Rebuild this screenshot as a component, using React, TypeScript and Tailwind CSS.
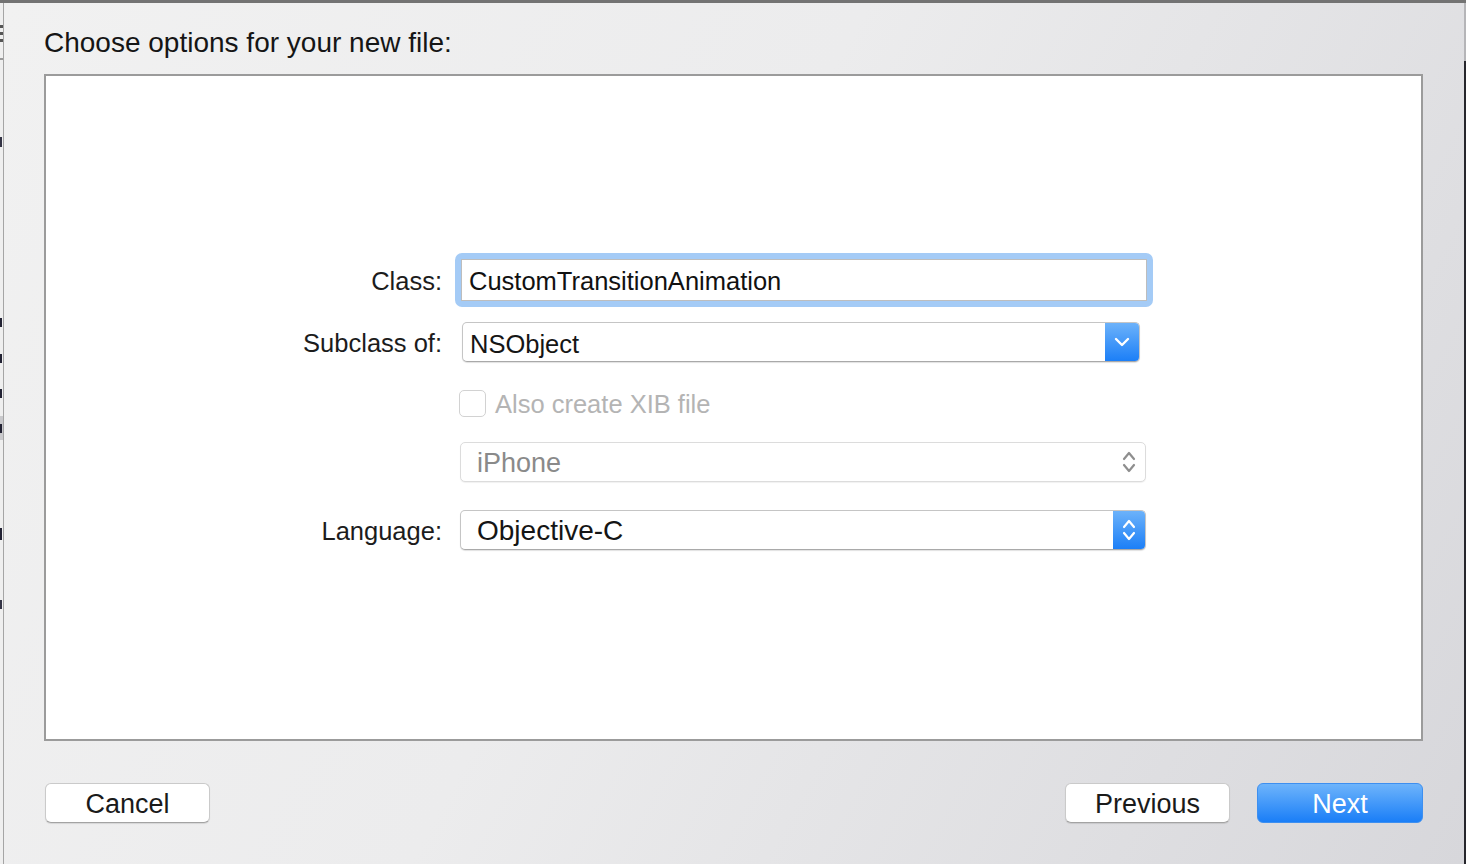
import React from 'react';

const ChevronDown = ({ color = '#fff' }: { color?: string }) => (
  <svg width="16" height="10" viewBox="0 0 16 10">
    <path d="M2 2 L8 8 L14 2" fill="none" stroke={color} strokeWidth="2.4" strokeLinecap="round" strokeLinejoin="round" />
  </svg>
);

const UpDown = ({ color = '#fff' }: { color?: string }) => (
  <svg width="16" height="28" viewBox="0 0 16 28">
    <path d="M3 11 L8 5 L13 11" fill="none" stroke={color} strokeWidth="2.2" strokeLinecap="round" strokeLinejoin="round" />
    <path d="M3 17 L8 23 L13 17" fill="none" stroke={color} strokeWidth="2.2" strokeLinecap="round" strokeLinejoin="round" />
  </svg>
);

const Label = ({ text }: { text: string }) => (
  <div className="w-[396px] shrink-0 pt-[4px] text-right text-[25.5px] text-[#1c1c1c] leading-none">{text}</div>
);

const App = () => {
  return (
    <div className="w-[1466px] h-[864px] flex flex-col overflow-hidden font-['Liberation_Sans',Arial,sans-serif]">
      <div className="h-[3px] bg-[#737373]" />
      <div className="flex-1 flex">
        {/* window behind, left edge */}
        <div className="w-[4px] shrink-0 bg-[#efefef] border-r border-[#a5a5a5] flex flex-col overflow-hidden">
          <div className="mt-[22px] flex flex-col gap-[4px]">
            <div className="h-[3px] w-[3px] bg-[#555]" />
            <div className="h-[3px] w-[3px] bg-[#555]" />
            <div className="h-[3px] w-[3px] bg-[#555]" />
          </div>
          <div className="mt-[16px] h-[2px] w-[3px] bg-[#999]" />
          <div className="mt-[77px] h-[10px] w-[2px] bg-[#334]" />
          <div className="mt-[171px] h-[9px] w-[2px] bg-[#223]" />
          <div className="mt-[27px] h-[9px] w-[2px] bg-[#223]" />
          <div className="mt-[26px] h-[9px] w-[2px] bg-[#223]" />
          <div className="mt-[18px] h-[24px] w-[3px] bg-[#c9c9cc] flex items-center">
            <div className="h-[9px] w-[2px] bg-[#223]" />
          </div>
          <div className="mt-[88px] h-[12px] w-[2px] bg-[#223]" />
          <div className="mt-[60px] h-[9px] w-[2px] bg-[#334]" />
        </div>

        {/* sheet */}
        <div className="flex-1 flex flex-col pl-[40px] pr-[41px] bg-[linear-gradient(118deg,#f1f1f1_0%,#ececed_45%,#d7d7db_100%)]">
          <div className="h-[71px] pt-[24px] leading-[32px] text-[28px] text-[#151515]">Choose options for your new file:</div>

          <div className="h-[667px] border-2 border-[#9b9b9b] bg-white flex flex-col">
            {/* Class */}
            <div className="mt-[177px] h-[54px] flex items-center">
              <Label text="Class:" />
              <div className="ml-[13px] w-[698px] h-[54px] rounded-[7px] bg-[#a4cbf6] p-[6px]">
                <div className="h-full bg-white border border-[#bdbdbd] flex items-center pl-[7px] pt-[2px] text-[25.5px] text-[#111]">
                  CustomTransitionAnimation
                </div>
              </div>
            </div>

            {/* Subclass */}
            <div className="mt-[15px] h-[40px] flex items-center">
              <Label text="Subclass of:" />
              <div className="ml-[20px] w-[678px] h-[40px] flex rounded-[5px] border border-[#c5c5c5] border-b-[#a9a9a9] bg-white overflow-hidden shadow-[0_1px_1px_rgba(0,0,0,0.12)]">
                <div className="flex-1 flex items-center pl-[7px] pt-[4px] text-[25.5px] text-[#151515]">NSObject</div>
                <div className="w-[34px] flex items-center justify-center bg-[linear-gradient(#6cb2fa,#1c7ff7)]">
                  <ChevronDown />
                </div>
              </div>
            </div>

            {/* XIB checkbox */}
            <div className="mt-[28px] h-[27px] flex items-center">
              <div className="w-[396px] shrink-0" />
              <div className="ml-[17px] w-[27px] h-[27px] rounded-[5px] border border-[#d2d2d2] bg-white" />
              <div className="ml-[9px] pt-[2px] text-[25.5px] text-[#b4b4b4] leading-none">Also create XIB file</div>
            </div>

            {/* Device */}
            <div className="mt-[25px] h-[40px] flex items-center">
              <div className="w-[396px] shrink-0" />
              <div className="ml-[18px] w-[686px] h-[40px] flex rounded-[5px] border border-[#dcdcdc] bg-white shadow-[0_1px_1px_rgba(0,0,0,0.06)]">
                <div className="flex-1 flex items-center pl-[16px] pt-[2px] text-[27px] text-[#8a8a8a]">iPhone</div>
                <div className="w-[32px] flex items-center justify-center">
                  <UpDown color="#8e8e8e" />
                </div>
              </div>
            </div>

            {/* Language */}
            <div className="mt-[28px] h-[40px] flex items-center">
              <Label text="Language:" />
              <div className="ml-[18px] w-[686px] h-[40px] flex rounded-[5px] border border-[#c5c5c5] border-b-[#a9a9a9] bg-white overflow-hidden shadow-[0_1px_1px_rgba(0,0,0,0.12)]">
                <div className="flex-1 flex items-center pl-[16px] pt-[2px] text-[28px] text-[#151515]">Objective-C</div>
                <div className="w-[32px] flex items-center justify-center bg-[linear-gradient(#6cb2fa,#1c7ff7)]">
                  <UpDown />
                </div>
              </div>
            </div>
          </div>

          {/* buttons */}
          <div className="mt-[42px] h-[40px] flex items-center">
            <button className="ml-[1px] w-[165px] h-[40px] rounded-[6px] bg-white border border-[#cacaca] border-b-[#a3a3a3] shadow-[0_1px_1px_rgba(0,0,0,0.1)] text-[27px] text-[#1a1a1a]">
              Cancel
            </button>
            <div className="flex-1" />
            <button className="w-[165px] h-[40px] rounded-[6px] bg-white border border-[#cacaca] border-b-[#a3a3a3] shadow-[0_1px_1px_rgba(0,0,0,0.1)] text-[27px] text-[#1a1a1a]">
              Previous
            </button>
            <button className="ml-[27px] w-[166px] h-[40px] rounded-[6px] bg-[linear-gradient(#6eb4fb,#1a7ef7)] border border-[#3d8ff0] text-[27px] text-white">
              Next
            </button>
          </div>
        </div>

        {/* window behind, right edge */}
        <div className="w-[2px] shrink-0 flex flex-col">
          <div className="h-[58px] bg-[#b5b5b8]" />
          <div className="flex-1 bg-[#26262c]" />
        </div>
      </div>
    </div>
  );
};

export default App;
